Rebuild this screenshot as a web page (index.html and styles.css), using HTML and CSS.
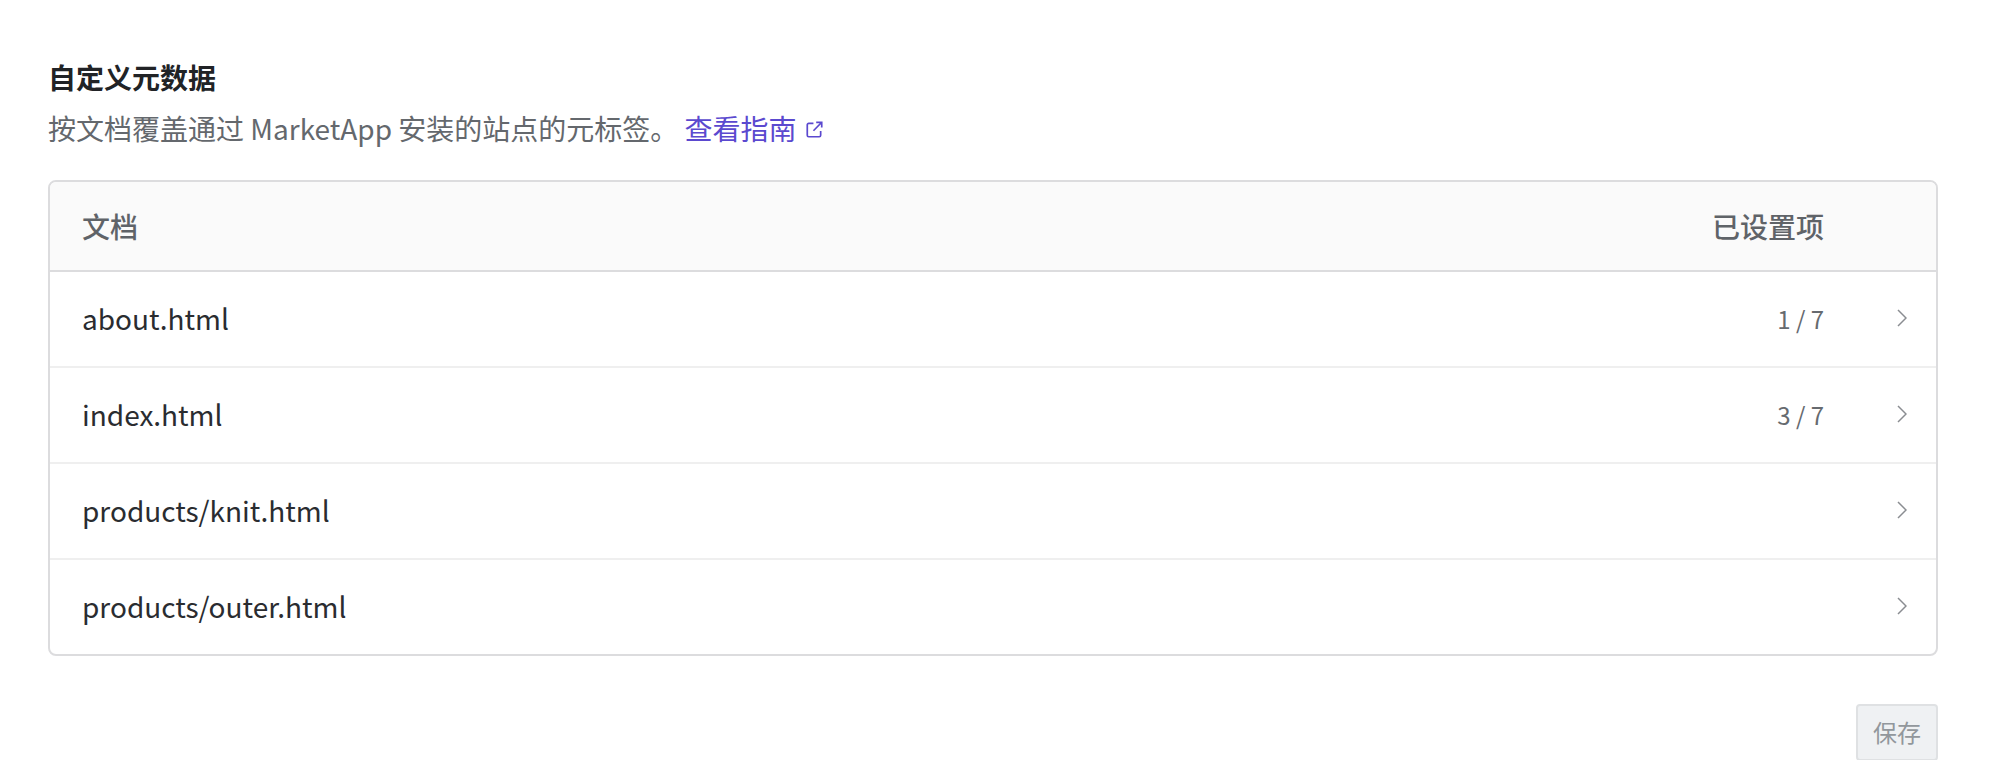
FILE: index.html
```html
<!DOCTYPE html>
<html lang="zh-CN">
<head>
    <meta charset="UTF-8">
    <title>自定义元数据</title>
    <link rel="stylesheet" href="styles.css">
</head>
<body>
    <div class="settings">
        <h2 class="title">自定义元数据</h2>
        <p class="desc">按文档覆盖通过 MarketApp 安装的站点的元标签。 <a class="guide-link" href="#">查看指南<svg class="ext-icon" width="17" height="17" viewBox="0 0 16 16" fill="none" stroke="currentColor" stroke-width="1.6"><path d="M7 2.2H2.5a1.3 1.3 0 0 0-1.3 1.3v10a1.3 1.3 0 0 0 1.3 1.3h10a1.3 1.3 0 0 0 1.3-1.3V9.5"/><path d="M7 9.2 14.6 1.4M9.6 1.2h5.2v5"/></svg></a></p>

        <div class="doc-table">
            <div class="row head">
                <span class="name">文档</span>
                <span class="count">已设置项</span>
                <span class="arrow"></span>
            </div>
            <div class="row">
                <span class="name">about.html</span>
                <span class="count">1 / 7</span>
                <span class="arrow"><svg width="10" height="18" viewBox="0 0 10 18" fill="none" stroke="#8a8d91" stroke-width="1.5"><path d="M1 1l8 8-8 8"/></svg></span>
            </div>
            <div class="row">
                <span class="name">index.html</span>
                <span class="count">3 / 7</span>
                <span class="arrow"><svg width="10" height="18" viewBox="0 0 10 18" fill="none" stroke="#8a8d91" stroke-width="1.5"><path d="M1 1l8 8-8 8"/></svg></span>
            </div>
            <div class="row">
                <span class="name">products/knit.html</span>
                <span class="count"></span>
                <span class="arrow"><svg width="10" height="18" viewBox="0 0 10 18" fill="none" stroke="#8a8d91" stroke-width="1.5"><path d="M1 1l8 8-8 8"/></svg></span>
            </div>
            <div class="row">
                <span class="name">products/outer.html</span>
                <span class="count"></span>
                <span class="arrow"><svg width="10" height="18" viewBox="0 0 10 18" fill="none" stroke="#8a8d91" stroke-width="1.5"><path d="M1 1l8 8-8 8"/></svg></span>
            </div>
        </div>

        <div class="actions">
            <button class="save" disabled>保存</button>
        </div>
    </div>
</body>
</html>
```

FILE: styles.css
```css
body {
    margin: 0;
    background-color: #fff;
    color: #2a2c30;
    font-family: "Noto Sans CJK SC", "Noto Sans", sans-serif;
    font-size: 28px;
}
.settings {
    padding: 55px 62px 0 48px;
}
.title {
    margin: 0;
    color: #212326;
    font-size: 28px;
    font-weight: 700;
    line-height: 44px;
}
.desc {
    margin: 7px 0 30px;
    color: #64686d;
    line-height: 44px;
}
.guide-link {
    color: #5b49cf;
    text-decoration: none;
}
.ext-icon {
    margin-left: 9px;
    vertical-align: 2px;
}
.doc-table {
    border: 2px solid #dcdcde;
    border-radius: 8px;
    overflow: hidden;
}
.row {
    display: flex;
    align-items: center;
    height: 92px;
    padding: 0 29px 2px 32px;
    border-top: 2px solid #efefef;
}
.row.head {
    height: 88px;
    padding-bottom: 0;
    background-color: #fafafa;
    border-top: none;
    border-bottom: 2px solid #dcdcde;
    color: #5f6368;
    font-weight: 500;
}
.row.head + .row {
    border-top: none;
}
.name {
    flex: 1;
}
.count {
    color: #666a6f;
    font-size: 24px;
}
.head .count {
    font-size: 28px;
    color: #5f6368;
}
.arrow {
    display: flex;
    justify-content: flex-end;
    width: 83px;
}
.actions {
    display: flex;
    justify-content: flex-end;
    margin-top: 48px;
}
.save {
    width: 82px;
    height: 57px;
    padding: 0 0 2px;
    border: 2px solid #dfe1e3;
    border-radius: 4px;
    background-color: #eff1f3;
    color: #92979c;
    font-family: inherit;
    font-size: 24px;
}
```
